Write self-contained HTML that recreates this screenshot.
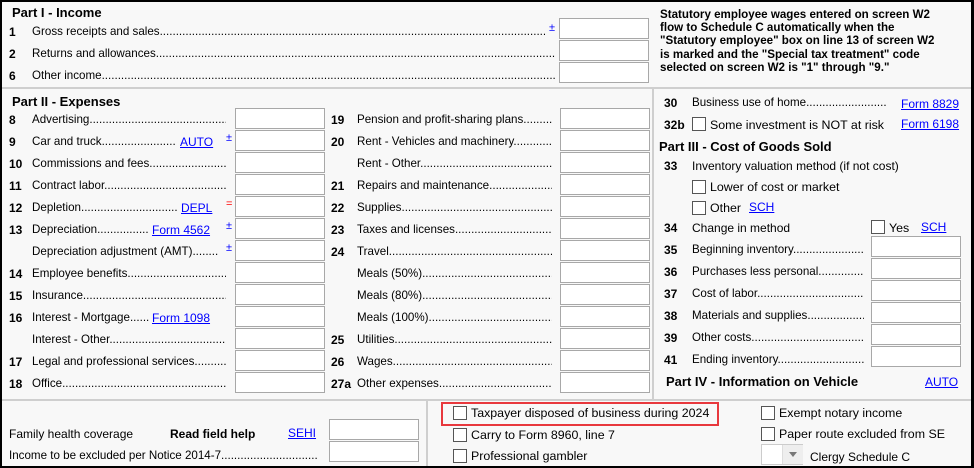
<!DOCTYPE html>
<html><head><meta charset="utf-8"><style>
*{margin:0;padding:0;box-sizing:border-box}
body{width:974px;height:468px;overflow:hidden;background:#000;font-family:"Liberation Sans",Arial,sans-serif;font-size:12px;color:#000}
#f{position:absolute;left:2px;top:2px;width:969px;height:464px;background:#f8f8f8}
.a{position:absolute;white-space:nowrap;line-height:14px}
.b{font-size:12.4px}
.l{position:absolute;white-space:nowrap;overflow:hidden;line-height:14px;font-size:11.6px}
.n{position:absolute;font-weight:bold;line-height:14px}
.h{position:absolute;font-weight:bold;font-size:13px;white-space:nowrap;line-height:15px}
.i{position:absolute;width:90px;height:21px;background:#fff;border:1px solid #a8a8a8}
.k{position:absolute;color:#00f;text-decoration:underline;line-height:14px;white-space:nowrap}
.pm{position:absolute;color:#00f;font-size:11px;line-height:12px}
.c{position:absolute;width:14px;height:14px;background:#fff;border:1px solid #555}
.hl{position:absolute;height:2px;background:#cfcfcf}
.vl{position:absolute;width:2px;background:#cfcfcf}
</style></head><body>
<div id="f"></div>
<div class="hl" style="left:2px;top:87px;width:969px"></div>
<div class="hl" style="left:2px;top:399px;width:969px"></div>
<div class="vl" style="left:652px;top:89px;height:310px"></div>
<div class="vl" style="left:426px;top:401px;height:65px"></div>

<div class="h" style="left:12px;top:5px">Part I - Income</div>
<div class="n" style="left:9px;top:25px">1</div><div class="l" style="left:32px;top:25px;width:513px">Gross receipts and sales............................................................................................................................................................</div>
<div class="pm" style="left:549px;top:22px">±</div>
<div class="n" style="left:9px;top:47px">2</div><div class="l" style="left:32px;top:47px;width:523px">Returns and allowances............................................................................................................................................................</div>
<div class="n" style="left:9px;top:69px">6</div><div class="l" style="left:32px;top:69px;width:523px">Other income............................................................................................................................................................................</div>
<div class="i" style="left:559px;top:18px"></div><div class="i" style="left:559px;top:40px"></div><div class="i" style="left:559px;top:62px"></div>
<div class="a" style="left:660px;top:8px;font-weight:bold;font-size:11.6px;line-height:13.2px">Statutory employee wages entered on screen W2<br>flow to Schedule C automatically when the<br>"Statutory employee" box on line 13 of screen W2<br>is marked and the "Special tax treatment" code<br>selected on screen W2 is "1" through "9."</div>

<div class="h" style="left:12px;top:94px">Part II - Expenses</div>
<div class="n" style="left:9px;top:113px">8</div><div class="l" style="left:32px;top:113px;width:194px">Advertising....................................................................................</div>
<div class="n" style="left:9px;top:135px">9</div><div class="l" style="left:32px;top:135px;width:144px">Car and truck....................................................</div><div class="k" style="left:180px;top:135px">AUTO</div><div class="pm" style="left:226px;top:132px">±</div>
<div class="n" style="left:9px;top:157px">10</div><div class="l" style="left:32px;top:157px;width:194px">Commissions and fees..........................................................</div>
<div class="n" style="left:9px;top:179px">11</div><div class="l" style="left:32px;top:179px;width:194px">Contract labor.......................................................................</div>
<div class="n" style="left:9px;top:201px">12</div><div class="l" style="left:32px;top:201px;width:145px">Depletion..............................................................</div><div class="k" style="left:181px;top:201px">DEPL</div><div class="pm" style="left:226px;top:198px;color:#f00">=</div>
<div class="n" style="left:9px;top:223px">13</div><div class="l" style="left:32px;top:223px;width:117px">Depreciation..................................</div><div class="k" style="left:152px;top:223px">Form 4562</div><div class="pm" style="left:226px;top:220px">±</div>
<div class="l" style="left:32px;top:245px;width:187px">Depreciation adjustment (AMT)..........................</div><div class="pm" style="left:226px;top:242px">±</div>
<div class="n" style="left:9px;top:267px">14</div><div class="l" style="left:32px;top:267px;width:194px">Employee benefits......................................................................</div>
<div class="n" style="left:9px;top:289px">15</div><div class="l" style="left:32px;top:289px;width:194px">Insurance.......................................................................................</div>
<div class="n" style="left:9px;top:311px">16</div><div class="l" style="left:32px;top:311px;width:117px">Interest - Mortgage....................</div><div class="k" style="left:152px;top:311px">Form 1098</div>
<div class="l" style="left:32px;top:333px;width:194px">Interest - Other..............................................................................</div>
<div class="n" style="left:9px;top:355px">17</div><div class="l" style="left:32px;top:355px;width:194px">Legal and professional services.......................................</div>
<div class="n" style="left:9px;top:377px">18</div><div class="l" style="left:32px;top:377px;width:194px">Office...............................................................................................</div>
<div class="i" style="left:235px;top:108px"></div><div class="i" style="left:235px;top:130px"></div><div class="i" style="left:235px;top:152px"></div><div class="i" style="left:235px;top:174px"></div><div class="i" style="left:235px;top:196px"></div><div class="i" style="left:235px;top:218px"></div><div class="i" style="left:235px;top:240px"></div><div class="i" style="left:235px;top:262px"></div><div class="i" style="left:235px;top:284px"></div><div class="i" style="left:235px;top:306px"></div><div class="i" style="left:235px;top:328px"></div><div class="i" style="left:235px;top:350px"></div><div class="i" style="left:235px;top:372px"></div>

<div class="n" style="left:331px;top:113px">19</div><div class="l" style="left:357px;top:113px;width:195px">Pension and profit-sharing plans.......................</div>
<div class="n" style="left:331px;top:135px">20</div><div class="l" style="left:357px;top:135px;width:195px">Rent - Vehicles and machinery...........................</div>
<div class="l" style="left:357px;top:157px;width:195px">Rent - Other...............................................................................</div>
<div class="n" style="left:331px;top:179px">21</div><div class="l" style="left:357px;top:179px;width:195px">Repairs and maintenance.........................................</div>
<div class="n" style="left:331px;top:201px">22</div><div class="l" style="left:357px;top:201px;width:195px">Supplies.......................................................................................</div>
<div class="n" style="left:331px;top:223px">23</div><div class="l" style="left:357px;top:223px;width:195px">Taxes and licenses...................................................................</div>
<div class="n" style="left:331px;top:245px">24</div><div class="l" style="left:357px;top:245px;width:195px">Travel............................................................................................</div>
<div class="l" style="left:357px;top:267px;width:195px">Meals (50%)...............................................................................</div>
<div class="l" style="left:357px;top:289px;width:195px">Meals (80%)...............................................................................</div>
<div class="l" style="left:357px;top:311px;width:195px">Meals (100%).............................................................................</div>
<div class="n" style="left:331px;top:333px">25</div><div class="l" style="left:357px;top:333px;width:195px">Utilities.........................................................................................</div>
<div class="n" style="left:331px;top:355px">26</div><div class="l" style="left:357px;top:355px;width:195px">Wages...........................................................................................</div>
<div class="n" style="left:331px;top:377px">27a</div><div class="l" style="left:357px;top:377px;width:195px">Other expenses..........................................................................</div>
<div class="i" style="left:560px;top:108px"></div><div class="i" style="left:560px;top:130px"></div><div class="i" style="left:560px;top:152px"></div><div class="i" style="left:560px;top:174px"></div><div class="i" style="left:560px;top:196px"></div><div class="i" style="left:560px;top:218px"></div><div class="i" style="left:560px;top:240px"></div><div class="i" style="left:560px;top:262px"></div><div class="i" style="left:560px;top:284px"></div><div class="i" style="left:560px;top:306px"></div><div class="i" style="left:560px;top:328px"></div><div class="i" style="left:560px;top:350px"></div><div class="i" style="left:560px;top:372px"></div>

<div class="n" style="left:664px;top:96px">30</div><div class="l" style="left:692px;top:96px;width:194px">Business use of home..........................................................</div><div class="k" style="left:901px;top:97px">Form 8829</div>
<div class="n" style="left:664px;top:118px">32b</div><div class="c" style="left:692px;top:117px"></div><div class="a b" style="left:710px;top:118px">Some investment is NOT at risk</div><div class="k" style="left:901px;top:117px">Form 6198</div>
<div class="h" style="left:659px;top:139px">Part III - Cost of Goods Sold</div>
<div class="n" style="left:664px;top:159px">33</div><div class="a" style="left:692px;top:159px">Inventory valuation method (if not cost)</div>
<div class="c" style="left:692px;top:180px"></div><div class="a b" style="left:710px;top:180px">Lower of cost or market</div>
<div class="c" style="left:692px;top:201px"></div><div class="a b" style="left:710px;top:201px">Other</div><div class="k" style="left:749px;top:200px">SCH</div>
<div class="n" style="left:664px;top:221px">34</div><div class="a" style="left:692px;top:221px">Change in method</div><div class="c" style="left:871px;top:220px"></div><div class="a b" style="left:889px;top:221px">Yes</div><div class="k" style="left:921px;top:220px">SCH</div>
<div class="n" style="left:664px;top:243px">35</div><div class="l" style="left:692px;top:243px;width:172px">Beginning inventory.........................................</div>
<div class="n" style="left:664px;top:265px">36</div><div class="l" style="left:692px;top:265px;width:172px">Purchases less personal..................................</div>
<div class="n" style="left:664px;top:287px">37</div><div class="l" style="left:692px;top:287px;width:172px">Cost of labor.....................................................</div>
<div class="n" style="left:664px;top:309px">38</div><div class="l" style="left:692px;top:309px;width:172px">Materials and supplies......................................</div>
<div class="n" style="left:664px;top:331px">39</div><div class="l" style="left:692px;top:331px;width:172px">Other costs.......................................................</div>
<div class="n" style="left:664px;top:353px">41</div><div class="l" style="left:692px;top:353px;width:172px">Ending inventory................................................</div>
<div class="i" style="left:871px;top:236px"></div><div class="i" style="left:871px;top:258px"></div><div class="i" style="left:871px;top:280px"></div><div class="i" style="left:871px;top:302px"></div><div class="i" style="left:871px;top:324px"></div><div class="i" style="left:871px;top:346px"></div>
<div class="h" style="left:666px;top:374px">Part IV - Information on Vehicle</div><div class="k" style="left:925px;top:375px">AUTO</div>

<div class="a" style="left:9px;top:427px">Family health coverage</div>
<div class="a" style="left:170px;top:427px;font-weight:bold">Read field help</div>
<div class="k" style="left:288px;top:426px">SEHI</div>
<div class="i" style="left:329px;top:419px"></div>
<div class="l" style="left:9px;top:449px;width:308px">Income to be excluded per Notice 2014-7.........................................................</div>
<div class="i" style="left:329px;top:441px"></div>

<div style="position:absolute;left:441px;top:402px;width:278px;height:24px;border:2px solid #e8383d"></div>
<div class="c" style="left:453px;top:406px"></div><div class="a b" style="left:471px;top:406px">Taxpayer disposed of business during 2024</div>
<div class="c" style="left:453px;top:428px"></div><div class="a b" style="left:471px;top:428px">Carry to Form 8960, line 7</div>
<div class="c" style="left:453px;top:449px"></div><div class="a b" style="left:471px;top:449px">Professional gambler</div>
<div class="c" style="left:761px;top:406px"></div><div class="a b" style="left:779px;top:406px">Exempt notary income</div>
<div class="c" style="left:761px;top:427px"></div><div class="a b" style="left:779px;top:427px">Paper route excluded from SE</div>
<div style="position:absolute;left:761px;top:444px;width:42px;height:21px;border:1px solid #ccc;background:#fff"><div style="position:absolute;left:20px;top:0;width:21px;height:19px;background:#eee;border-left:1px solid #ddd"></div><div style="position:absolute;left:27px;top:7px;border-left:4px solid transparent;border-right:4px solid transparent;border-top:5px solid #777"></div></div>
<div class="a" style="left:810px;top:450px">Clergy Schedule C</div>
</body></html>
